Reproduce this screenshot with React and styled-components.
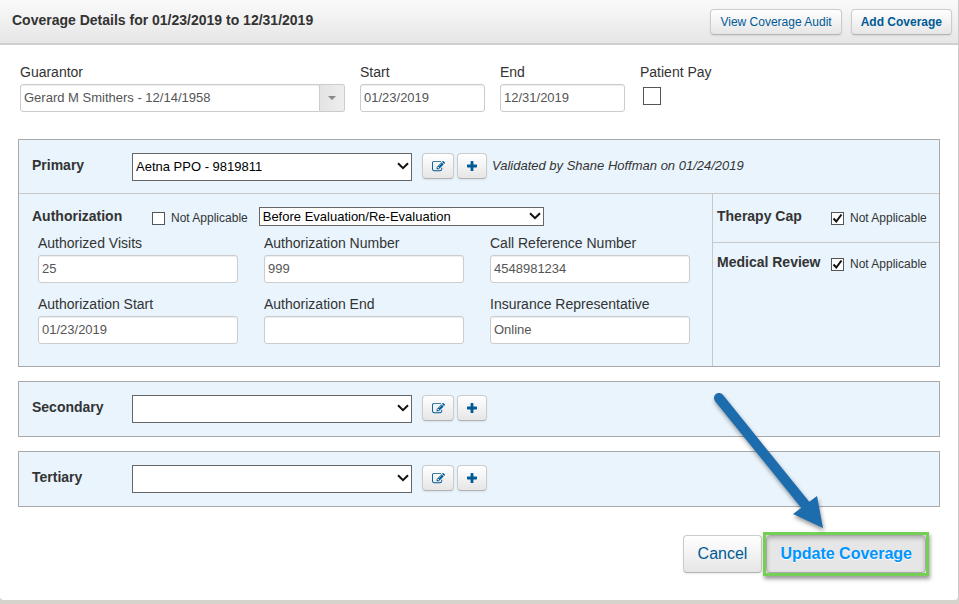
import React from "react";
import styled, { createGlobalStyle } from "styled-components";

const GlobalStyle = createGlobalStyle`
  *, *::before, *::after { box-sizing: border-box; }
  body {
    margin: 0;
    background: #d6d3cb;
    color: #333;
    font: 14px/20px "Liberation Sans", Arial, sans-serif;
  }
  button, input, select { font-family: inherit; margin: 0; }
`;

const Panel = styled.main`
  background: #fff;
  border-right: 1px solid #ccc;
  border-radius: 0 0 4px 4px;
`;

const Header = styled.header`
  display: flex;
  align-items: center;
  gap: 9px;
  height: 45px;
  padding: 0 6px 0 12px;
  border-bottom: 2px solid #d0d0d0;
  background: linear-gradient(#fafafa, #e6e6e6);
`;

const Title = styled.h1`
  flex: 1;
  margin: 0;
  padding-bottom: 4px;
  font-size: 14px;
  line-height: 20px;
`;

const Button = styled.button`
  display: inline-flex;
  align-items: center;
  justify-content: center;
  height: ${(p) => (p.$large ? 38 : 26)}px;
  padding: 0 ${(p) => (p.$large ? 14 : 9)}px;
  border: 1px solid #ccc;
  border-bottom-color: #b3b3b3;
  border-radius: 4px;
  background: linear-gradient(#fff, #e6e6e6);
  box-shadow: 0 1px 2px rgba(0, 0, 0, 0.08);
  color: #005a96;
  font-size: ${(p) => (p.$large ? 16 : 12)}px;
  font-weight: ${(p) => (p.$bold ? "bold" : "normal")};
  line-height: 20px;
  white-space: nowrap;
`;

const IconButton = styled(Button)`
  width: ${(p) => p.$width}px;
  padding: 0;
`;

const Body = styled.form`
  padding: 17px 18px 24px;
`;

const TopFields = styled.div`
  display: flex;
  gap: 15px;
  padding-left: 2px;
`;

const FieldBox = styled.div`
  display: flex;
  flex-direction: column;
  gap: 2px;
  width: ${(p) => (p.$width ? `${p.$width}px` : "auto")};
  min-width: 0;
`;

const TextInput = styled.input`
  width: 100%;
  height: 28px;
  padding: 0 4px 2px 3px;
  border: 1px solid #ccc;
  border-radius: 3px;
  background: #fff;
  box-shadow: inset 0 1px 1px rgba(0, 0, 0, 0.075);
  color: #555;
  font-size: 13px;
`;

const Combo = styled.div`
  display: flex;

  ${TextInput} {
    flex: 1;
    min-width: 0;
    border-radius: 3px 0 0 3px;
  }
`;

const ComboButton = styled.button`
  display: grid;
  place-items: center;
  width: 25px;
  height: 28px;
  padding: 0;
  border: 1px solid #ccc;
  border-left: 0;
  border-radius: 0 3px 3px 0;
  background: linear-gradient(90deg, #e3e3e3, #eee);
`;

const Coverage = styled.section`
  margin-top: ${(p) => p.$gap}px;
  border: 1px solid #a9a9ab;
  background: #e9f4fd;
`;

const PlanRow = styled.div`
  display: flex;
  align-items: flex-start;
  padding: 13px;
`;

const PlanName = styled.label`
  width: 100px;
  padding-top: 2px;
  font-weight: bold;
  line-height: 20px;
`;

const PlanTools = styled.div`
  display: flex;
  gap: 3px;
  margin: 0 5px 0 10px;
`;

const Validation = styled.em`
  padding-top: 3px;
  font-size: 13px;
`;

const SelectBox = styled.div`
  display: grid;
  width: ${(p) => p.$width}px;

  > * { grid-area: 1 / 1; }
  > svg {
    align-self: center;
    justify-self: end;
    margin: 0 3px 2px 0;
    pointer-events: none;
  }
`;

const Select = styled.select`
  appearance: none;
  width: 100%;
  height: ${(p) => (p.$compact ? 19 : 28)}px;
  padding: 0 20px 1px 3px;
  border: 1px solid #666;
  border-radius: 0;
  background: #fff;
  color: #000;
  font-size: 13px;
`;

const Details = styled.div`
  display: flex;
  margin-top: -1px;
  border-top: 1px solid #c8c8c8;
`;

const Authorization = styled.div`
  flex: 1;
  min-width: 0;
  padding: 12px 22px 22px 13px;
`;

const AuthorizationHead = styled.div`
  display: flex;
  align-items: flex-end;
  height: 20px;
  margin-bottom: 7px;
`;

const Heading = styled.h2`
  width: ${(p) => p.$width}px;
  margin: 0;
  font-size: 14px;
  line-height: 20px;
  white-space: nowrap;
`;

const FieldGrid = styled.div`
  display: grid;
  grid-template-columns: repeat(3, minmax(0, 1fr));
  gap: 11px 26px;
  padding-left: 6px;
`;

const Reviews = styled.aside`
  width: 227px;
  border-left: 1px solid #c8c8c8;
`;

const Review = styled.div`
  display: flex;
  height: ${(p) => (p.$divided ? 49 : 42)}px;
  padding: ${(p) => (p.$divided ? 12 : 9)}px 0 0 4px;
  border-bottom: ${(p) => (p.$divided ? "1px solid #c8c8c8" : "0")};
`;

const CheckLabel = styled.label`
  display: flex;
  align-items: center;
  gap: 6px;
  height: 20px;
  padding-top: 4px;
  margin-right: 11px;
  font-size: 12px;
  white-space: nowrap;
`;

const CheckFrame = styled.span`
  display: grid;
  place-items: center;
  width: ${(p) => p.$size}px;
  margin: ${(p) => (p.$size > 13 ? "3px" : "0")};

  > * { grid-area: 1 / 1; }
  > svg { display: none; pointer-events: none; }
  > input:checked + svg { display: block; }
`;

const CheckInput = styled.input`
  appearance: none;
  width: 100%;
  aspect-ratio: 1;
  border: 1px solid #555;
  background: #fff;
`;

const Footer = styled.footer`
  position: relative;
  display: flex;
  justify-content: flex-end;
  align-items: center;
  gap: 1px;
  margin-top: 25px;
  padding-right: 11px;
`;

const Highlight = styled.div`
  border: 3px solid #76cf55;
  background: #ddd;
  box-shadow: 1px 3px 4px rgba(0, 0, 0, 0.4);
`;

const PrimaryButton = styled(Button)`
  padding: 0 13px;
  border-color: #aaa;
  background: #e6e6e6;
  box-shadow: inset 0 2px 4px rgba(0, 0, 0, 0.25);
  color: #0095ff;
  text-shadow: 0 1px 1px #fff;
`;

const Pointer = styled.svg`
  position: absolute;
  right: 112px;
  bottom: 46px;
  filter: drop-shadow(1px 3px 2px rgba(0, 0, 0, 0.4));
  pointer-events: none;
`;

const Chevron = () => (
  <svg width="12" height="8" viewBox="0 0 12 8" aria-hidden="true">
    <path d="M1 1.2 6 6.2 11 1.2" fill="none" stroke="#111" strokeWidth="2" />
  </svg>
);

const EditIcon = () => (
  <svg width="13" height="13" viewBox="0 0 1792 1792" fill="currentColor" aria-hidden="true">
    <path d="M888 1184l116-116-152-152-116 116v56h96v96h56zm440-720q-16-16-33 1l-350 350q-17 17-1 33t33-1l350-350q17-17 1-33zm80 594v190q0 119-84.5 203.5t-203.5 84.5h-832q-119 0-203.5-84.5t-84.5-203.5v-832q0-119 84.5-203.5t203.5-84.5h832q63 0 117 25 15 7 18 23 3 17-9 29l-49 49q-14 14-32 8-23-6-45-6h-832q-66 0-113 47t-47 113v832q0 66 47 113t113 47h832q66 0 113-47t47-113v-126q0-13 9-22l64-64q15-15 35-7t20 29zm-96-738l288 288-672 672h-288v-288zm444 132l-92 92-288-288 92-92q28-28 68-28t68 28l152 152q28 28 28 68t-28 68z" />
  </svg>
);

const PlusIcon = () => (
  <svg width="12" height="12" viewBox="0 0 12 12" fill="currentColor" aria-hidden="true">
    <path d="M5.200 1h1.600q.6 0 .6.6v3h3q.6 0 .6.6v1.600q0 .6-.6.6h-3v3q0 .6-.6.6H5.200q-.6 0-.6-.6v-3h-3Q1 7.400 1 6.800V5.200q0-.6.6-.6h3v-3q0-.6.6-.6z" />
  </svg>
);

const Checkbox = ({ id, checked, size = 13 }) => (
  <CheckFrame $size={size}>
    <CheckInput type="checkbox" id={id} defaultChecked={checked} />
    <svg width="11" height="11" viewBox="0 0 11 11" aria-hidden="true">
      <path d="M1.500 5.500 4.300 8.500 9.500 1.500" fill="none" stroke="#111" strokeWidth="2" />
    </svg>
  </CheckFrame>
);

const NotApplicable = ({ checked }) => (
  <CheckLabel>
    <Checkbox checked={checked} />
    Not Applicable
  </CheckLabel>
);

const Field = ({ id, label, value, width }) => (
  <FieldBox $width={width}>
    <label htmlFor={id}>{label}</label>
    <TextInput id={id} type="text" defaultValue={value} />
  </FieldBox>
);

const Plan = ({ id, name, value = "", note }) => (
  <PlanRow>
    <PlanName htmlFor={id}>{name}</PlanName>
    <SelectBox $width={280}>
      <Select id={id} defaultValue={value}>
        <option value={value}>{value}</option>
      </Select>
      <Chevron />
    </SelectBox>
    <PlanTools>
      <IconButton type="button" $width={32} aria-label={`Edit ${name}`}>
        <EditIcon />
      </IconButton>
      <IconButton type="button" $width={30} aria-label={`Add ${name}`}>
        <PlusIcon />
      </IconButton>
    </PlanTools>
    {note && <Validation>{note}</Validation>}
  </PlanRow>
);

const authorizationFields = [
  ["visits", "Authorized Visits", "25"],
  ["number", "Authorization Number", "999"],
  ["reference", "Call Reference Number", "4548981234"],
  ["auth-start", "Authorization Start", "01/23/2019"],
  ["auth-end", "Authorization End", ""],
  ["representative", "Insurance Representative", "Online"],
];

export default function App() {
  return (
    <>
      <GlobalStyle />
      <Panel>
        <Header>
          <Title>Coverage Details for 01/23/2019 to 12/31/2019</Title>
          <Button type="button">View Coverage Audit</Button>
          <Button type="button" $bold>Add Coverage</Button>
        </Header>
        <Body>
          <TopFields>
            <FieldBox $width={325}>
              <label htmlFor="guarantor">Guarantor</label>
              <Combo>
                <TextInput id="guarantor" type="text" defaultValue="Gerard M Smithers - 12/14/1958" />
                <ComboButton type="button" aria-label="Show guarantors">
                  <svg width="8" height="4" viewBox="0 0 8 4" aria-hidden="true">
                    <path d="M0 0h8L4 4z" fill="#888" />
                  </svg>
                </ComboButton>
              </Combo>
            </FieldBox>
            <Field id="start" label="Start" value="01/23/2019" width={125} />
            <Field id="end" label="End" value="12/31/2019" width={125} />
            <FieldBox>
              <label htmlFor="patient-pay">Patient Pay</label>
              <Checkbox id="patient-pay" size={18} />
            </FieldBox>
          </TopFields>

          <Coverage $gap={27}>
            <Plan
              id="primary"
              name="Primary"
              value="Aetna PPO - 9819811"
              note="Validated by Shane Hoffman on 01/24/2019"
            />
            <Details>
              <Authorization>
                <AuthorizationHead>
                  <Heading $width={120}>Authorization</Heading>
                  <NotApplicable />
                  <SelectBox $width={285}>
                    <Select $compact aria-label="Authorization timing">
                      <option>Before Evaluation/Re-Evaluation</option>
                    </Select>
                    <Chevron />
                  </SelectBox>
                </AuthorizationHead>
                <FieldGrid>
                  {authorizationFields.map(([id, label, value]) => (
                    <Field key={id} id={id} label={label} value={value} />
                  ))}
                </FieldGrid>
              </Authorization>
              <Reviews>
                <Review $divided>
                  <Heading $width={114}>Therapy Cap</Heading>
                  <NotApplicable checked />
                </Review>
                <Review>
                  <Heading $width={114}>Medical Review</Heading>
                  <NotApplicable checked />
                </Review>
              </Reviews>
            </Details>
          </Coverage>

          <Coverage $gap={14}>
            <Plan id="secondary" name="Secondary" />
          </Coverage>
          <Coverage $gap={14}>
            <Plan id="tertiary" name="Tertiary" />
          </Coverage>

          <Footer>
            <Button type="button" $large>Cancel</Button>
            <Highlight>
              <PrimaryButton type="button" $large $bold>Update Coverage</PrimaryButton>
            </Highlight>
            <Pointer width="120" height="140" viewBox="0 0 120 140" aria-hidden="true">
              <path d="M11 8 99 117" stroke="#1d6cad" strokeWidth="10" strokeLinecap="round" />
              <path d="M115 138 85 124 109 106z" fill="#1d6cad" />
            </Pointer>
          </Footer>
        </Body>
      </Panel>
    </>
  );
}
